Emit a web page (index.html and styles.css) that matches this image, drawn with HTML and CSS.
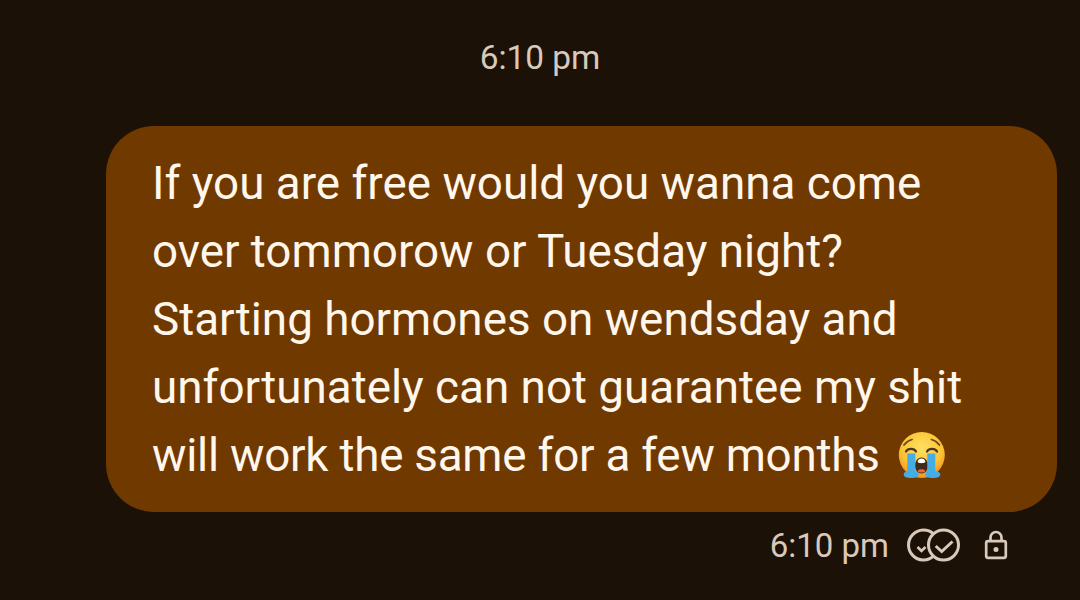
FILE: index.html
```html
<!DOCTYPE html>
<html lang="en">
<head>
  <meta charset="UTF-8">
  <title>Message</title>
  <link rel="stylesheet" href="styles.css">
</head>
<body>
  <div class="thread">
    <div class="stamp">6:10 pm</div>

    <div class="bubble">
      <div class="line">If you are free would you wanna come</div>
      <div class="line">over tommorow or Tuesday night?</div>
      <div class="line">Starting hormones on wendsday and</div>
      <div class="line">unfortunately can not guarantee my shit</div>
      <div class="line last"><span class="last-text">will work the same for a few months</span>
        <svg class="emoji" viewBox="0 0 50 50" width="50" height="50">
          <defs>
            <radialGradient id="skin" cx="50%" cy="35%" r="62%">
              <stop offset="0%" stop-color="#fee05f"/>
              <stop offset="70%" stop-color="#fcc435"/>
              <stop offset="100%" stop-color="#f29a22"/>
            </radialGradient>
          </defs>
          <circle cx="24.800" cy="24" r="23" fill="url(#skin)"/>
          <!-- brows -->
          <path d="M7 14c2-3 4.500-4.500 8-5.500M42.500 14c-2-3-4.500-4.500-8-5.500" fill="none" stroke="#6b4a2a" stroke-width="1.800" stroke-linecap="round"/>
          <!-- closed eyes -->
          <path d="M9 20.500c2-3.500 8-3.500 10 0M30 20.500c2-3.500 8-3.500 10 0" fill="none" stroke="#4a3626" stroke-width="2.200" stroke-linecap="round"/>
          <!-- mouth -->
          <path d="M24.500 26.500c-4 0-6.500 4-6.500 8 0 5 3 8 6.500 8s6.500-3 6.500-8c0-4-2.500-8-6.500-8z" fill="#3f2a1c"/>
          <path d="M20.500 31c.5-2.500 2-3.500 4-3.500s3.500 1 4 3.500c-2 1.600-6 1.600-8 0z" fill="#fff"/>
          <path d="M20.500 40c1-2.500 7-2.500 8 0-1.500 2-6.500 2-8 0z" fill="#e9653d"/>
          <!-- tears -->
          <path d="M10.300 22.500h8V40c2.500.5 3.500 1.700 3.500 3.500 0 2.500-3 3.500-7.500 3.500s-7.600-1-7.600-3.500c0-2 1.500-3 3.600-3.500z" fill="#45ace4"/>
          <path d="M30.300 22.500h8V40c3 .5 5 1.500 5 3.500 0 2.500-3 3.500-7.500 3.500s-7.500-1-7.500-3.500c0-1.800 .6-3 2-3.500z" fill="#45ace4"/>
        </svg>
      </div>
    </div>

    <div class="meta">
      <span class="meta-time">6:10 pm</span>
      <svg class="checks" viewBox="0 0 54 36" width="54" height="36">
        <path d="M26.500 6.800a15 15 0 1 0 0 22.400" fill="none" stroke="#d9c9ba" stroke-width="3"/>
        <path d="M10.500 20l4 4 4-4" fill="none" stroke="#d9c9ba" stroke-width="2.600"/>
        <circle cx="36.500" cy="18" r="15" fill="none" stroke="#d9c9ba" stroke-width="3"/>
        <path d="M28.700 19l6 5.500 10.800-10" fill="none" stroke="#d9c9ba" stroke-width="3"/>
      </svg>
      <svg class="lock" viewBox="0 0 24 32" width="24" height="32">
        <path d="M6.500 12.500V8.500a5.500 5.500 0 0 1 11 0v4" fill="none" stroke="#d9c9ba" stroke-width="2.700"/>
        <rect x="2.200" y="12.200" width="19.600" height="16.600" rx="1.800" fill="none" stroke="#d9c9ba" stroke-width="2.700"/>
        <circle cx="12" cy="20.500" r="2.500" fill="#d9c9ba"/>
      </svg>
    </div>
  </div>
</body>
</html>
```

FILE: styles.css
```css
body {
  margin: 0;
  background: #1c1106;
  font-family: "Roboto", "Noto Sans", sans-serif;
  overflow: hidden;
}

.thread {
  width: 1080px;
  height: 600px;
  display: flex;
  flex-direction: column;
  align-items: flex-end;
}

.stamp {
  align-self: center;
  margin-top: 38px;
  height: 40px;
  line-height: 40px;
  font-size: 33.400px;
  color: #d9c9ba;
}

.bubble {
  margin-top: 48px;
  margin-right: 23px;
  box-sizing: border-box;
  width: 951px;
  height: 386px;
  padding: 24px 46px 0;
  background: #703900;
  border-radius: 48px;
  color: #fff6ec;
  font-size: 45.800px;
}

.line {
  height: 68px;
  line-height: 68px;
  white-space: nowrap;
}

.last {
  display: flex;
  align-items: center;
  gap: 18px;
}

.last-text {
  letter-spacing: -0.240px;
}

.emoji {
  margin-top: -1px;
  margin-left: -1px;
}

.meta {
  display: flex;
  align-items: center;
  gap: 18px;
  margin-top: 13px;
  margin-right: 72px;
  height: 40px;
  color: #d9c9ba;
  font-size: 33px;
}

.lock {
  margin-left: 5px;
}
```
